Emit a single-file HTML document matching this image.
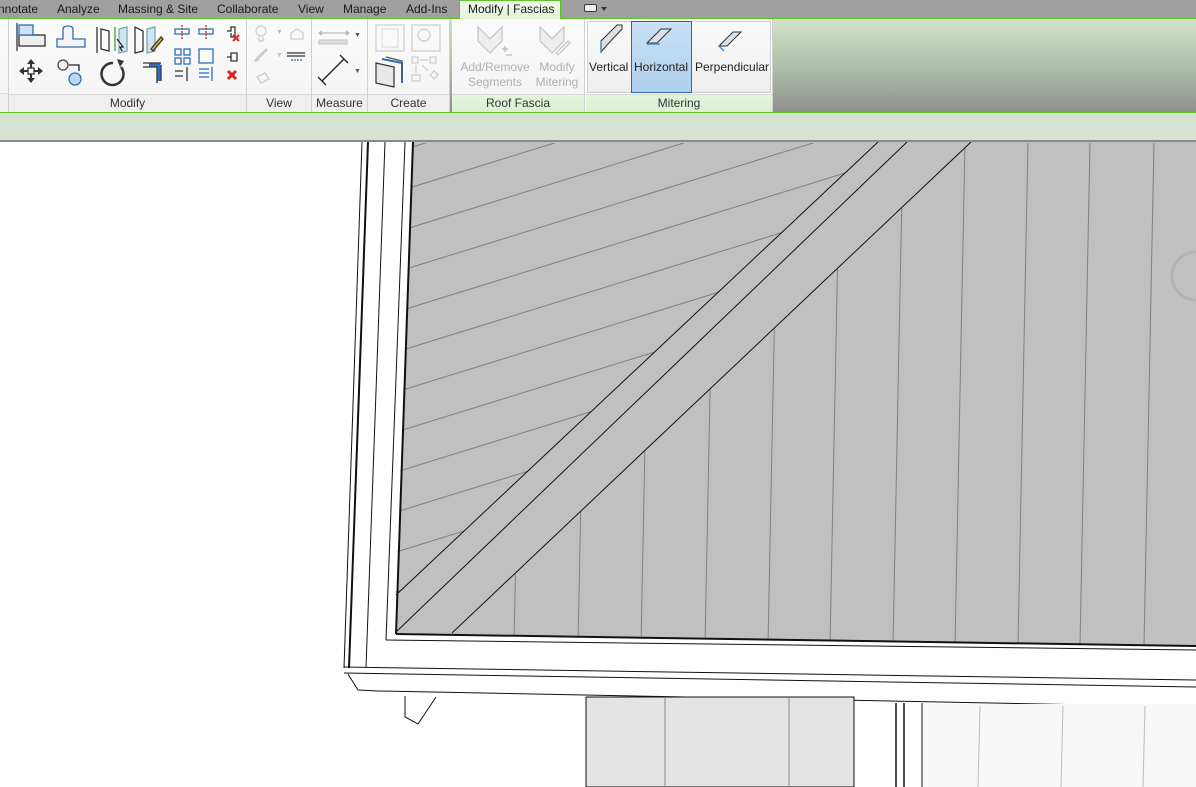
<!DOCTYPE html>
<html><head><meta charset="utf-8"><style>
*{margin:0;padding:0;box-sizing:border-box}
body{width:1196px;height:787px;overflow:hidden;background:#fff;font-family:"Liberation Sans",sans-serif;position:relative}
.abs{position:absolute}
.tabbar{left:0;top:0;width:1196px;height:19px;background:#a0a0a0;border-bottom:1px solid #5ac528}
.tab{position:absolute;top:2px;font-size:12px;color:#1a1a1a}
.ribbon{left:0;top:19px;width:1196px;height:94px;background:linear-gradient(#d2e4c8,#a9b6a4 60%,#8e8e8e)}
.panel{position:absolute;top:0;height:93px;background:linear-gradient(#fbfbfb,#f3f3f3);border-right:1px solid #d0d0d0}
.plabel{position:absolute;left:0;right:0;bottom:0;height:18px;background:#efefef;border-top:1px solid #d8d8d8;font-size:12px;color:#333;text-align:center;line-height:17px}
.gl{background:linear-gradient(#e6f4de,#dcefd2)}
.opt{left:0;top:112px;width:1196px;height:30px;background:#d8e2d2;border-top:1px solid #5ac528;border-bottom:2px solid #8a8a8a}
.btxt{position:absolute;font-size:12px;color:#222;text-align:center}
.dis{color:#b0b0b0}
</style></head><body>
<div class="abs tabbar">
<span class="tab" style="left:-2px">nnotate</span>
<span class="tab" style="left:57px">Analyze</span>
<span class="tab" style="left:118px">Massing &amp; Site</span>
<span class="tab" style="left:217px">Collaborate</span>
<span class="tab" style="left:298px">View</span>
<span class="tab" style="left:343px">Manage</span>
<span class="tab" style="left:406px">Add-Ins</span>
<div class="abs" style="left:459px;top:0;width:102px;height:20px;background:linear-gradient(#f0f8ea,#e2f2d8);border:1px solid #5ac528;border-bottom:none"><span class="tab" style="left:8px;top:1px">Modify | Fascias</span></div>
<div class="abs" style="left:584px;top:4px;width:13px;height:8px;border:1px solid #333;border-radius:2px;background:#eee"></div>
<div class="abs" style="left:601px;top:7px;width:0;height:0;border-left:3px solid transparent;border-right:3px solid transparent;border-top:4px solid #333"></div>
</div>
<div class="abs ribbon">
<div class="panel" style="left:0;width:9px"><div class="plabel" style="height:19px"></div></div>
<div class="panel" style="left:9px;width:238px"><div class="plabel">Modify</div>
<svg class="abs" style="left:0;top:0" width="238" height="76" fill="none" stroke-width="1.3">
<g stroke="#333"><path d="M8 4V32"/><rect x="10" y="16" width="26" height="11" fill="#eee"/></g><rect x="10" y="6" width="14" height="10" fill="#cfe3f7" stroke="#2d6fb5"/>
<path d="M48 28V20h6V10c0-4 10-4 10 0v10h12v8z" stroke="#2d6fb5" fill="#f4f4f4"/>
<path d="M88 8v26M92 10l8 2v20l-8-2z" stroke="#333"/><path d="M106 8v24" stroke="#3a3"/><path d="M110 10l8-2v24l-8 2z" fill="#cfe3f7" stroke="#7aa"/><path d="M108 20l6 8h-3l2 4" stroke="#222" fill="#fff"/>
<path d="M126 8v26l8-2V12z" stroke="#333"/><path d="M138 10l8-2v24l-8 2z" fill="#cfe3f7" stroke="#7aa"/><path d="M142 30l10-12 2 2-10 12z" fill="#f3b81c" stroke="#333"/>
<g stroke="#2d6fb5"><rect x="166" y="10" width="14" height="5"/><rect x="190" y="10" width="14" height="5"/><rect x="166" y="30" width="6" height="6"/><rect x="175" y="30" width="6" height="6"/><rect x="166" y="39" width="6" height="6"/><rect x="175" y="39" width="6" height="6"/><rect x="190" y="30" width="14" height="14"/></g>
<path d="M173 6v14M197 6v14" stroke="#c22" stroke-dasharray="2 1"/>
<path d="M218 12h4v-4h4v10h-4v-4" stroke="#333"/><path d="M224 16l6 6M230 16l-6 6" stroke="#d22" stroke-width="2"/>
<path d="M218 38h4v-4h6v8h-6v-4" stroke="#333"/>
<path d="M22 42v20M12 52h20" stroke="#333" stroke-width="2"/><path d="M22 40l-4 5h8zM22 64l-4-5h8zM10 52l5-4v8zM34 52l-5-4v8z" fill="#333"/><rect x="19" y="49" width="6" height="6" fill="#fff" stroke="#333"/>
<circle cx="54" cy="46" r="5" stroke="#444" fill="#f4f4f4"/><circle cx="66" cy="60" r="6" stroke="#2d6fb5" fill="#bcd8f2"/><path d="M60 46h10v6" stroke="#222"/>
<path d="M104 44a11 11 0 1 0 8 4" stroke="#333" stroke-width="2.5"/><path d="M108 40l7 2-4 6z" fill="#333"/>
<path d="M134 44h18M134 48h14v16M152 46v16" stroke="#333"/><path d="M140 46h10v16" stroke="#2d6fb5" stroke-width="3"/>
<path d="M166 52h8M166 57h8M178 48v14" stroke="#333"/><path d="M190 50h10M190 54h10M190 58h10M203 48v14" stroke="#2d6fb5"/>
<path d="M219 52l8 8M227 52l-8 8" stroke="#d22" stroke-width="3"/>
</svg></div>
<div class="panel" style="left:247px;width:65px"><div class="plabel">View</div>
<svg class="abs" width="65" height="76" fill="none" stroke="#ccc" stroke-width="1.3"><circle cx="14" cy="12" r="5"/><path d="M12 18v4h4v-4"/><path d="M10 40l10-10M8 42l4-2" stroke-width="3"/><path d="M40 34h18M40 37h18" stroke="#333"/><path d="M44 41h12" stroke="#2d6fb5" stroke-dasharray="2 1"/><path d="M10 58l8-4 4 6-8 4z"/><path d="M44 14l6-4 6 4v6h-12z"/></svg>
<span class="abs" style="left:29px;top:10px;font-size:7px;color:#bbb">▼</span><span class="abs" style="left:29px;top:33px;font-size:7px;color:#bbb">▼</span></div>
<div class="panel" style="left:312px;width:56px"><div class="plabel">Measure</div>
<svg class="abs" width="56" height="76" fill="none" stroke-width="1.3"><path d="M8 14h28" stroke="#bbb"/><path d="M6 14l4-3v6zM38 14l-4-3v6z" fill="#bbb"/><rect x="7" y="21" width="28" height="4" fill="#ddd" stroke="#ccc"/><path d="M10 62l22-22" stroke="#222"/><path d="M6 58l8 8M28 36l8 8" stroke="#222"/></svg>
<span class="abs" style="left:42px;top:13px;font-size:7px;color:#555">▼</span><span class="abs" style="left:42px;top:49px;font-size:7px;color:#555">▼</span></div>
<div class="panel" style="left:368px;width:82px"><div class="plabel">Create</div>
<svg class="abs" width="82" height="76" fill="none" stroke-width="1.2"><rect x="8" y="6" width="28" height="26" stroke="#ccc"/><rect x="14" y="10" width="16" height="18" stroke="#ddd"/><rect x="44" y="6" width="28" height="26" stroke="#ccc"/><circle cx="56" cy="16" r="6" stroke="#ccc"/><path d="M8 44l18 4v20l-18-4z" fill="#e8e8e8" stroke="#333"/><path d="M14 40l20 4v20" stroke="#2d6fb5" stroke-width="2"/><path d="M18 38l16 4v18" stroke="#555"/><g stroke="#ccc"><rect x="44" y="38" width="6" height="6"/><rect x="62" y="38" width="6" height="6"/><rect x="44" y="56" width="8" height="6"/><path d="M52 41h8M48 46v8M54 46l6 6M62 56l4-4 4 4-4 4z"/></g></svg></div>
<div class="panel" style="left:452px;width:133px"><div class="plabel gl">Roof Fascia</div>
<svg class="abs" width="133" height="40" fill="none" stroke="#c8c8c8" stroke-width="1.3"><path d="M26 8l12 12 12-12v14l-12 12-12-12z" fill="#eee"/><path d="M50 30h6M53 27v6M54 36h6" stroke="#bbb"/><path d="M88 8l12 12 12-12v14l-12 12-12-12z" fill="#eee"/><path d="M104 34l12-12 2 2-12 12z"/></svg>
<div class="btxt dis" style="left:4px;top:41px;width:78px;line-height:15px">Add/Remove<br>Segments</div>
<div class="btxt dis" style="left:80px;top:41px;width:50px;line-height:15px">Modify<br>Mitering</div></div>
<div class="panel" style="left:585px;width:188px;background:#fff"><div class="plabel gl" style="left:1px">Mitering</div>
<div class="abs" style="left:2px;top:2px;width:184px;height:72px;background:linear-gradient(#fafafa,#eeeeee);border:1px solid #cfcfcf"></div>
<div class="abs" style="left:46px;top:2px;width:61px;height:72px;background:linear-gradient(#c8e0f6,#b0d0ee);border:1px solid #2b65b0"></div>
<svg class="abs" width="188" height="45" fill="none">
<path d="M16 33V22l16-16h5v4L22 26z" fill="#dde0e4" stroke="#333"/><path d="M16 22v12" stroke="#3a8ee8" stroke-width="1.5"/>
<path d="M62 24l14-14h10l-14 14z" fill="#dde0e4" stroke="#333"/><path d="M62 25h13" stroke="#3a8ee8" stroke-width="1.5"/>
<path d="M134 27l14-14h8l-14 14z" fill="#dde0e4" stroke="#333"/><path d="M134 27l5 5" stroke="#3a8ee8" stroke-width="1.5"/>
</svg>
<div class="btxt" style="left:4px;top:41px">Vertical</div>
<div class="btxt" style="left:49px;top:41px">Horizontal</div>
<div class="btxt" style="left:110px;top:41px">Perpendicular</div></div>
</div>
<div class="abs opt"></div>
<svg class="abs" style="left:0;top:142px" width="1196" height="645" viewBox="0 142 1196 645">
<defs>
<clipPath id="left"><polygon points="413,143 878,143 396,595"/></clipPath>
<clipPath id="right"><polygon points="971,143 1196,143 1196,646 452,633"/></clipPath>
</defs>
<polygon points="413,142 1196,142 1196,646 396,633" fill="#c0c0c0"/>
<g clip-path="url(#left)" stroke="#808080" stroke-width="1">
<line x1="380" y1="157" x2="900" y2="-4"/><line x1="380" y1="197" x2="900" y2="36"/><line x1="380" y1="237" x2="900" y2="76"/><line x1="380" y1="277" x2="900" y2="116"/><line x1="380" y1="317" x2="900" y2="156"/><line x1="380" y1="357" x2="900" y2="196"/><line x1="380" y1="397" x2="900" y2="236"/><line x1="380" y1="437" x2="900" y2="276"/><line x1="380" y1="477" x2="900" y2="316"/><line x1="380" y1="517" x2="900" y2="356"/><line x1="380" y1="557" x2="900" y2="396"/><line x1="380" y1="597" x2="900" y2="436"/>
</g>
<g clip-path="url(#right)" stroke="#808080" stroke-width="1">
<line x1="514" y1="645" x2="524" y2="142"/><line x1="578" y1="645" x2="588" y2="142"/><line x1="641" y1="645" x2="651" y2="142"/><line x1="705" y1="645" x2="715" y2="142"/><line x1="768" y1="645" x2="778" y2="142"/><line x1="830" y1="645" x2="840" y2="142"/><line x1="893" y1="645" x2="903" y2="142"/><line x1="955" y1="645" x2="965" y2="142"/><line x1="1018" y1="645" x2="1028" y2="142"/><line x1="1080" y1="645" x2="1090" y2="142"/><line x1="1144" y1="645" x2="1154" y2="142"/>
</g>
<g stroke="#111" stroke-width="1" fill="none">
<line x1="396" y1="595" x2="878" y2="142"/><line x1="396" y1="632" x2="907" y2="142"/><line x1="452" y1="633" x2="971" y2="142"/>
<line x1="413" y1="142" x2="396" y2="634" stroke-width="2"/>
<line x1="396" y1="634" x2="1196" y2="646" stroke-width="2"/>
<line x1="362" y1="142" x2="344" y2="668"/><line x1="368" y1="142" x2="349" y2="668" stroke-width="2"/>
<line x1="385" y1="142" x2="366" y2="668"/><line x1="405" y1="142" x2="386" y2="640"/>
<line x1="386" y1="640" x2="1196" y2="650"/>
<line x1="344" y1="667" x2="1196" y2="680"/><line x1="344" y1="673" x2="1196" y2="687"/>
<line x1="378" y1="691" x2="1196" y2="707"/>
<polyline points="348,674 358,690 378,691"/>
<polyline points="405,696 405,717 418,724 436,697"/>
</g>
<rect x="586" y="697" width="268" height="90" fill="#e4e4e4" stroke="#111"/>
<line x1="665" y1="698" x2="665" y2="787" stroke="#888"/><line x1="789" y1="698" x2="789" y2="787" stroke="#888"/>
<rect x="922" y="704" width="274" height="83" fill="#f6f7f6"/>
<g stroke="#111" stroke-width="1.5"><line x1="896" y1="703" x2="896" y2="787"/><line x1="904" y1="703" x2="904" y2="787"/></g>
<line x1="922" y1="703" x2="922" y2="787" stroke="#111"/>
<g stroke="#bbb"><line x1="980" y1="706" x2="978" y2="787"/><line x1="1063" y1="706" x2="1061" y2="787"/><line x1="1145" y1="706" x2="1143" y2="787"/></g>
<path d="M1196 252a22 22 0 0 0 0 48" fill="none" stroke="#aaa" stroke-width="3" opacity=".6"/>
</svg>
</body></html>
